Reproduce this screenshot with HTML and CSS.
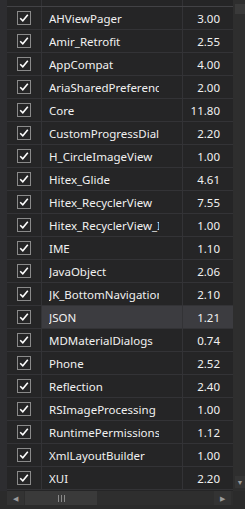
FILE: index.html
```html
<!DOCTYPE html>
<html lang="en">
<head>
  <meta charset="UTF-8">
  <title>Libraries</title>
  <link rel="stylesheet" href="styles.css">
</head>
<body>
  <div class="frame">
    <div class="main">
      <div class="grid">
        <div class="row header">
          <div class="cell check"></div>
          <div class="cell name"><span class="label">Name</span></div>
          <div class="cell version">Version</div>
        </div>
        <div id="rows"></div>
      </div>
      <div class="vscroll">
        <div class="vthumb"></div>
        <div class="vspace"></div>
        <div class="arrow down">&#9660;</div>
      </div>
    </div>
    <div class="hscroll">
      <div class="arrow left">&#9664;</div>
      <div class="hthumb">
        <svg width="7" height="7" viewBox="0 0 7 7"><path d="M0.5 0V7M3.5 0V7M6.5 0V7" stroke="#8a8a8a" stroke-width="1"/></svg>
      </div>
      <div class="hspace"></div>
      <div class="arrow right">&#9654;</div>
    </div>
  </div>

  <script>
    const libs = [
      ['AHViewPager', '3.00'],
      ['Amir_Retrofit', '2.55'],
      ['AppCompat', '4.00'],
      ['AriaSharedPreferences', '2.00'],
      ['Core', '11.80'],
      ['CustomProgressDialog', '2.20'],
      ['H_CircleImageView', '1.00'],
      ['Hitex_Glide', '4.61'],
      ['Hitex_RecyclerView', '7.55'],
      ['Hitex_RecyclerView_Item', '1.00'],
      ['IME', '1.10'],
      ['JavaObject', '2.06'],
      ['JK_BottomNavigationView', '2.10'],
      ['JSON', '1.21'],
      ['MDMaterialDialogs', '0.74'],
      ['Phone', '2.52'],
      ['Reflection', '2.40'],
      ['RSImageProcessing', '1.00'],
      ['RuntimePermissions', '1.12'],
      ['XmlLayoutBuilder', '1.00'],
      ['XUI', '2.20']
    ];

    const tick = '<svg width="10" height="10" viewBox="0 0 10 10"><path d="M1.2 5.2 L3.8 7.8 L8.8 1.8" fill="none" stroke="#fff" stroke-width="1.6"/></svg>';

    const rows = document.getElementById('rows');
    libs.forEach(([name, version]) => {
      const row = document.createElement('div');
      row.className = 'row' + (name === 'JSON' ? ' selected' : '');
      row.innerHTML =
        '<div class="cell check"><span class="box">' + tick + '</span></div>' +
        '<div class="cell name"><span class="label">' + name + '</span></div>' +
        '<div class="cell version">' + version + '</div>';
      rows.appendChild(row);
    });
  </script>
</body>
</html>
```

FILE: styles.css
```css
* {
  box-sizing: border-box;
}

body {
  margin: 0;
  background: #2b2b2b;
  font-family: 'Noto Sans', sans-serif;
  font-size: 11.5px;
  color: #f1f1f1;
  overflow: hidden;
}

.frame {
  width: 245px;
  height: 509px;
  display: flex;
  flex-direction: column;
  overflow: hidden;
}

.main {
  display: flex;
  height: 491px;
  overflow: hidden;
}

.grid {
  width: 233px;
  border-left: 7px solid #2d2d30;
  background: #252526;
  margin-top: -16px;
}

.row {
  display: grid;
  grid-template-columns: 35px 141px 50px;
  height: 23px;
  border-bottom: 1px solid #333336;
}

.row.header {
  border-bottom-color: #424245;
  color: #c8c8c8;
}

.cell {
  display: flex;
  align-items: center;
  border-right: 1px solid #333336;
  overflow: hidden;
  white-space: nowrap;
}

.cell.name {
  padding-left: 7px;
}

.label {
  display: block;
  width: 110px;
  overflow: hidden;
}

.cell.version {
  justify-content: flex-end;
  padding-right: 13px;
  border-right: none;
}

.row.selected .name,
.row.selected .version {
  background: #3c3c40;
}

.cell.check {
  justify-content: center;
}

.box {
  width: 14px;
  height: 14px;
  border: 1px solid #8a8a8a;
  display: flex;
  align-items: center;
  justify-content: center;
}

.vscroll {
  width: 12px;
  background: #2e2e2e;
  display: flex;
  flex-direction: column;
  padding-top: 4px;
}

.vthumb {
  height: 10px;
  margin-left: 2px;
  background: #3a3a3a;
}

.vspace {
  flex: 1;
}

.arrow {
  color: #9a9a9a;
  font-size: 7px;
  display: flex;
  align-items: center;
  justify-content: center;
}

.arrow.down {
  height: 12px;
  margin-bottom: 3px;
  margin-left: 2px;
  background: #353535;
}

.hscroll {
  height: 14px;
  margin-left: 7px;
  margin-right: 12px;
  background: #2e2e2e;
  display: flex;
  align-items: stretch;
}

.arrow.left,
.arrow.right {
  width: 17px;
  background: #333333;
}

.arrow.right {
  margin-right: 2px;
}

.hthumb {
  width: 72px;
  margin-left: 1px;
  background: #3a3a3a;
  display: flex;
  align-items: center;
  justify-content: center;
}

.hspace {
  flex: 1;
}
```
